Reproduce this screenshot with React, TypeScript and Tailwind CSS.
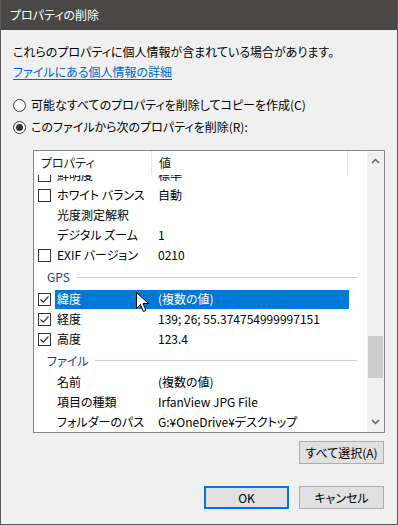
import React from 'react';

const font = '"Noto Sans CJK JP", "Noto Sans", sans-serif';

type Row =
  | { kind: 'item'; name: string; value?: string; check?: boolean | null; selected?: boolean }
  | { kind: 'group'; name: string; tall?: boolean };

const rows: Row[] = [
  { kind: 'item', name: '鮮明度', value: '標準', check: false },
  { kind: 'item', name: 'ホワイト バランス', value: '自動', check: false },
  { kind: 'item', name: '光度測定解釈', check: null },
  { kind: 'item', name: 'デジタル ズーム', value: '1', check: null },
  { kind: 'item', name: 'EXIF バージョン', value: '0210', check: false },
  { kind: 'group', name: 'GPS', tall: true },
  { kind: 'item', name: '緯度', value: '(複数の値)', check: true, selected: true },
  { kind: 'item', name: '経度', value: '139; 26; 55.374754999997151', check: true },
  { kind: 'item', name: '高度', value: '123.4', check: true },
  { kind: 'group', name: 'ファイル' },
  { kind: 'item', name: '名前', value: '(複数の値)', check: null },
  { kind: 'item', name: '項目の種類', value: 'IrfanView JPG File', check: null },
  { kind: 'item', name: 'フォルダーのパス', value: 'G:¥OneDrive¥デスクトップ', check: null },
];

const Checkbox = ({ checked }: { checked: boolean }) => (
  <div className="w-[13px] h-[13px] border border-[#333333] bg-white flex items-center justify-center shrink-0">
    {checked && (
      <svg width="11" height="11" viewBox="0 0 11 11">
        <path d="M1.5 5.5 L4.2 8.2 L9.5 2.5" fill="none" stroke="#333333" strokeWidth="1.2" />
      </svg>
    )}
  </div>
);

const Radio = ({ checked }: { checked: boolean }) => (
  <div className="w-[13px] h-[13px] rounded-full border border-[#333333] bg-white flex items-center justify-center shrink-0">
    {checked && <div className="w-[7px] h-[7px] rounded-full bg-[#333333]" />}
  </div>
);

const Button = ({ text, isDefault }: { text: string; isDefault?: boolean }) => (
  <div
    className={
      'w-[85px] h-[23px] flex items-center justify-center bg-[#e1e1e1] text-[12px] text-black ' +
      (isDefault ? 'border-2 border-[#0078d7]' : 'border border-[#adadad]')
    }
  >
    {text}
  </div>
);

export default function App() {
  return (
    <div
      className="w-[398px] h-[525px] bg-[#f0f0f0] border border-t-0 border-[#5a5a5a] flex flex-col text-black [font-feature-settings:'palt'] relative overflow-hidden"
      style={{ fontFamily: font }}
    >
      {/* タイトルバー */}
      <div className="h-[30px] bg-[#4a4846] text-white text-[12px] pl-[9px] flex items-center shrink-0">
        プロパティの削除
      </div>

      <div className="flex flex-col pl-[12px] pr-[12px] text-[12px]">
        <div className="mt-[14px] h-[16px] leading-[16px]">これらのプロパティに個人情報が含まれている場合があります。</div>
        <div className="mt-[4px] h-[16px] leading-[16px] text-[#0066cc] underline underline-offset-2">
          ファイルにある個人情報の詳細
        </div>

        <div className="mt-[14px] h-[22px] flex items-center gap-[5px]">
          <Radio checked={false} />
          <span>可能なすべてのプロパティを削除してコピーを作成(C)</span>
        </div>
        <div className="h-[22px] flex items-center gap-[5px]">
          <Radio checked />
          <span>このファイルから次のプロパティを削除(R):</span>
        </div>

        {/* プロパティ一覧 */}
        <div className="mt-[12px] ml-[20px] w-[352px] h-[283px] border border-[#828790] bg-white flex">
          <div className="flex-1 flex flex-col min-w-0">
            <div className="h-[24px] flex items-center shrink-0 text-[#1a1a1a] relative z-10 bg-white">
              <div className="w-[118px] pl-[7px] h-full flex items-center border-r border-[#e5e5e5]">プロパティ</div>
              <div className="w-[196px] pl-[7px] h-full flex items-center border-r border-[#e5e5e5]">値</div>
            </div>
            <div className="flex-1 overflow-hidden">
              <div className="-mt-[10px] flex flex-col">
                {rows.map((r, i) =>
                  r.kind === 'group' ? (
                    <div
                      key={i}
                      className={
                        'flex items-center pl-[13px] pr-[10px] gap-[6px] text-[#1e3a8f] ' +
                        (r.tall ? 'h-[24px]' : 'h-[23px]')
                      }
                    >
                      <span>{r.name}</span>
                      <div className="flex-1 h-px bg-[#c8cfe0]" />
                    </div>
                  ) : (
                    <div key={i} className="h-[20px] flex items-center pl-[4px]">
                      <div className="w-[13px] flex items-center">
                        {r.check !== null && r.check !== undefined && <Checkbox checked={r.check} />}
                      </div>
                      <div
                        className={
                          'ml-[4px] w-[294px] h-[19px] flex items-center ' +
                          (r.selected ? 'bg-[#0078d7] text-white' : '')
                        }
                      >
                        <div className="w-[103px] pl-[2px] whitespace-nowrap">{r.name}</div>
                        <div className="whitespace-nowrap">{r.value}</div>
                      </div>
                    </div>
                  )
                )}
              </div>
            </div>
          </div>

          {/* スクロールバー */}
          <div className="w-[17px] bg-[#f0f0f0] flex flex-col items-center shrink-0">
            <div className="h-[20px] flex items-center justify-center">
              <svg width="9" height="6" viewBox="0 0 9 6">
                <path d="M1 5 L4.5 1.5 L8 5" fill="none" stroke="#606060" strokeWidth="1.5" />
              </svg>
            </div>
            <div className="mt-[165px] w-[15px] h-[42px] bg-[#cdcdcd]" />
            <div className="mt-auto h-[20px] flex items-center justify-center">
              <svg width="9" height="6" viewBox="0 0 9 6">
                <path d="M1 1 L4.5 4.5 L8 1" fill="none" stroke="#606060" strokeWidth="1.5" />
              </svg>
            </div>
          </div>
        </div>

        <div className="mt-[8px] flex justify-end pr-[1px]">
          <Button text="すべて選択(A)" />
        </div>
        <div className="mt-[22px] flex justify-end gap-[10px] pr-[1px]">
          <Button text="OK" isDefault />
          <Button text="キャンセル" />
        </div>
      </div>

      {/* マウスカーソル */}
      <svg className="absolute left-[135px] top-[292px]" width="13" height="21" viewBox="0 0 13 21">
        <path
          d="M0.5 0.5 L0.5 16.5 L4.5 12.5 L7.5 19.5 L10 18.5 L7 11.5 L12.5 11.5 Z"
          fill="white"
          stroke="black"
          strokeWidth="1"
          strokeLinejoin="round"
        />
      </svg>
    </div>
  );
}
